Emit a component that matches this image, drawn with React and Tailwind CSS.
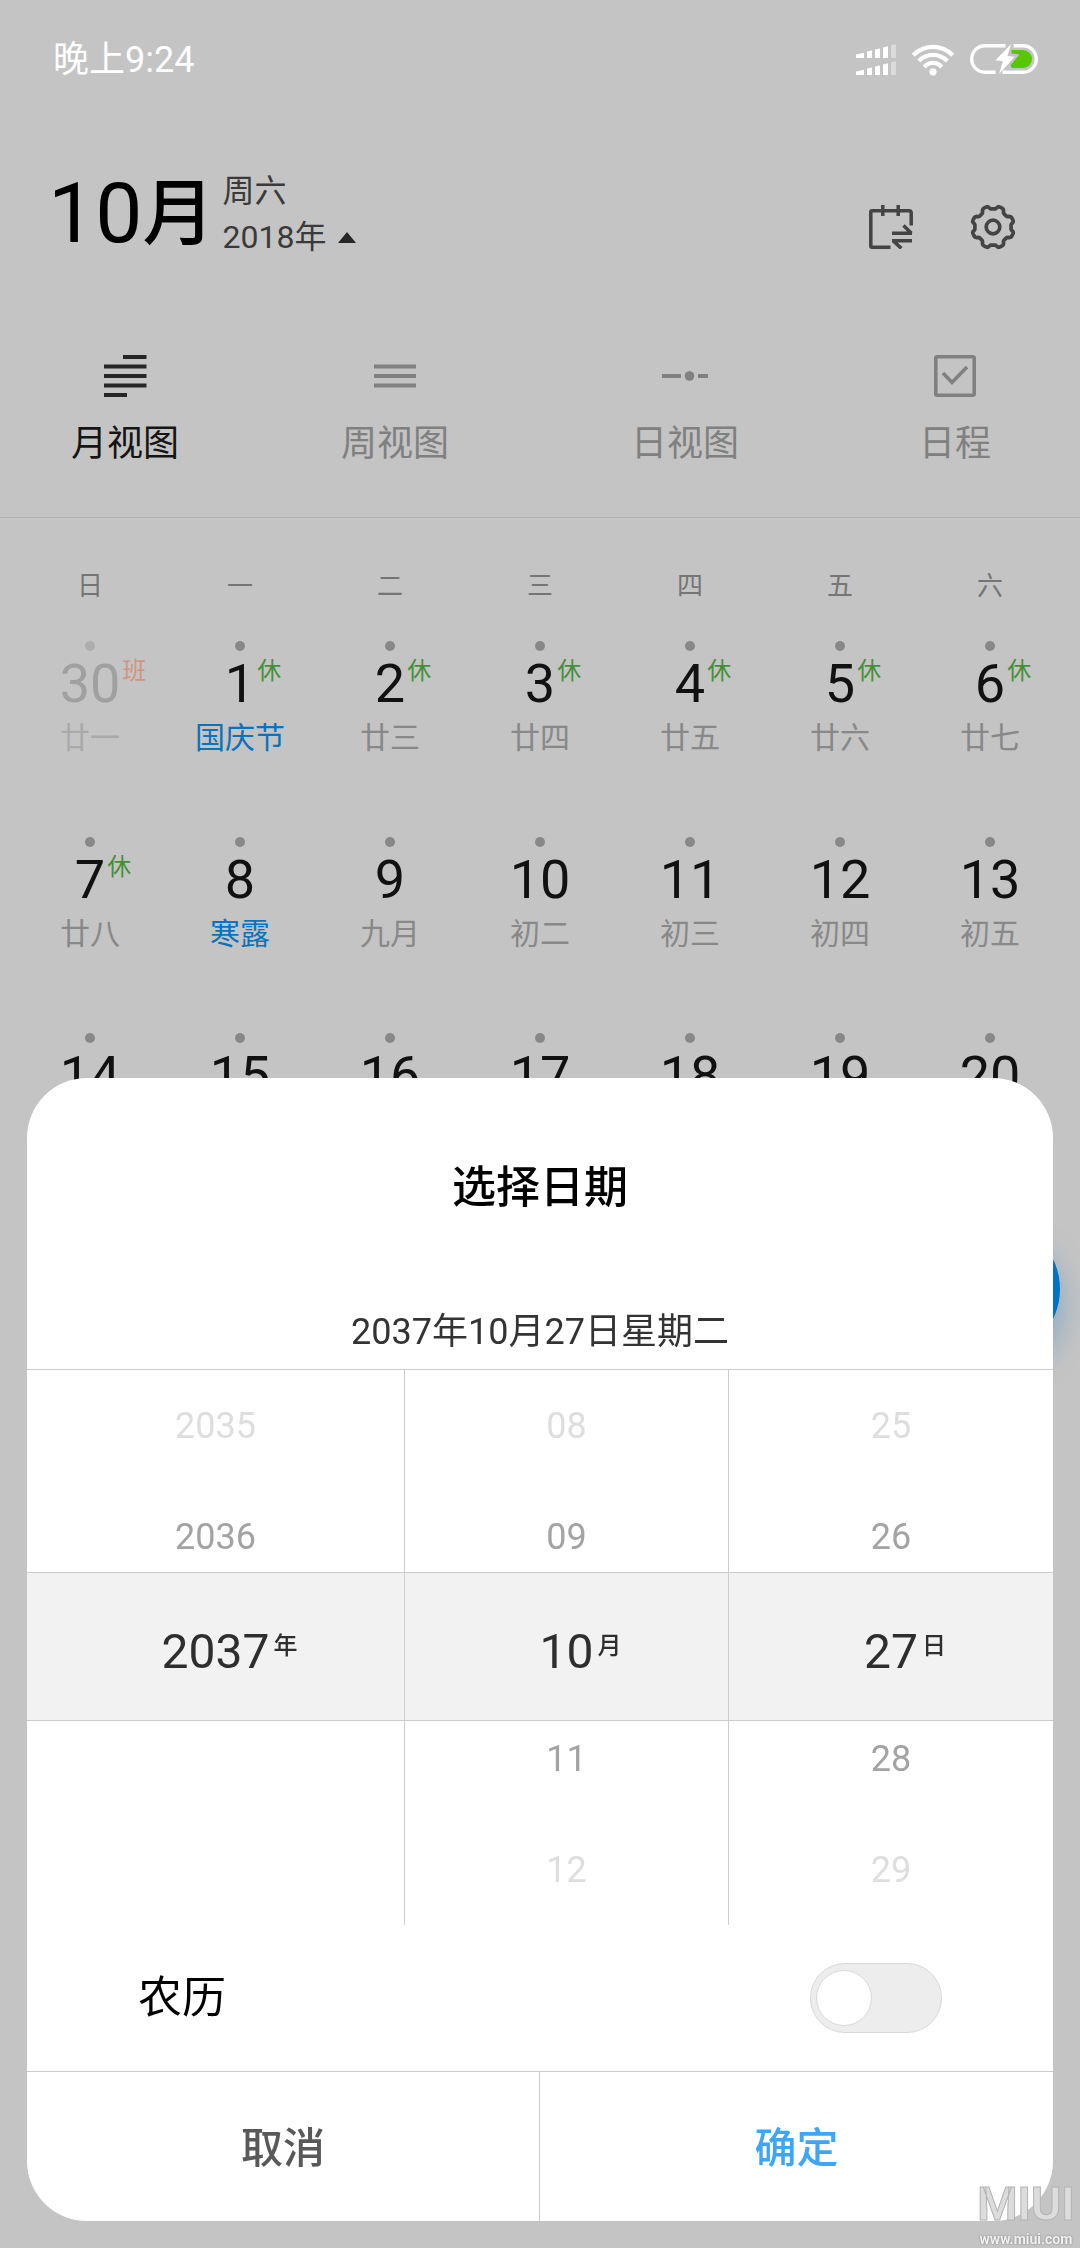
import React, { useState } from 'react';
import clsx from 'clsx';

const weekdays = ['日', '一', '二', '三', '四', '五', '六'];

const weeks = [
    [
        { day: 30, lunar: '廿一', badge: '班', muted: true },
        { day: 1, lunar: '国庆节', badge: '休', festival: true },
        { day: 2, lunar: '廿三', badge: '休' },
        { day: 3, lunar: '廿四', badge: '休' },
        { day: 4, lunar: '廿五', badge: '休' },
        { day: 5, lunar: '廿六', badge: '休' },
        { day: 6, lunar: '廿七', badge: '休' },
    ],
    [
        { day: 7, lunar: '廿八', badge: '休' },
        { day: 8, lunar: '寒露', festival: true },
        { day: 9, lunar: '九月' },
        { day: 10, lunar: '初二' },
        { day: 11, lunar: '初三' },
        { day: 12, lunar: '初四' },
        { day: 13, lunar: '初五' },
    ],
    [
        { day: 14 },
        { day: 15 },
        { day: 16 },
        { day: 17 },
        { day: 18 },
        { day: 19 },
        { day: 20 },
    ],
];

const wheels = [
    { name: '年', values: ['2035', '2036', '2037', '', ''] },
    { name: '月', values: ['08', '09', '10', '11', '12'] },
    { name: '日', values: ['25', '26', '27', '28', '29'] },
];

// Outside rows fade away from the selected one
const wheelColors = ['text-[#dedede]', 'text-[#a3a3a3]', 'text-[#2e2e2e]', 'text-[#a3a3a3]', 'text-[#dedede]'];

const SignalIcon = () => (
    <svg className="w-10 h-8" viewBox="0 0 40 32" fill="#fff">
        <path d="M0 10.5 8 8.7V14H0zM11 7.4 16 6.4V14H11zM19 5.6 24 4.6V14H19zM27 3.4 32 2.2V14H27z" />
        <path d="M35 1.2 40 .2V14H35zM35 18.2 40 17.2V31H35z" opacity=".4" />
        <path d="M0 27.5 8 25.7V31H0zM11 24.4 16 23.4V31H11zM19 22.6 24 21.6V31H19zM27 20.4 32 19.2V31H27z" />
    </svg>
);

const WifiIcon = () => (
    <svg className="w-[42px] h-8" viewBox="0 0 42 32" fill="none" stroke="#fff" strokeWidth="4.2">
        <path d="M1.3 11.2C12.5.2 29.5.2 40.7 11.2" />
        <path d="M6.7 17C15 8.8 27 8.8 35.3 17" />
        <path d="M12.2 23C17 17.6 25 17.6 29.8 23" />
        <circle cx="21" cy="27.8" r="3.6" fill="#fff" stroke="none" />
    </svg>
);

const BatteryIcon = () => (
    <svg className="w-[68px] h-8" viewBox="0 0 68 32">
        <path d="M35.5 1.7H15A13.3 13.3 0 0 0 15 28.3H25.5M43.5 1.7H53A13.3 13.3 0 0 1 53 28.3H32.5" fill="none" stroke="#fff" strokeWidth="3.4" />
        <path d="M41 .2 25.5 16.2 33 17.2 29 30 44.8 12.8 37.4 12z" fill="#fff" />
        <path d="M41.5 6H53A9 9 0 0 1 53 24H43Q41 24 40.6 21L49.5 10.4 41.4 9.6z" fill="#57c800" />
    </svg>
);

const SyncCalendarIcon = () => (
    <svg className="w-[44px] h-[44px]" viewBox="0 0 44 44" fill="none" stroke="#444" strokeWidth="3.5">
        <path d="M21.5 42.2H3Q1.8 42.2 1.8 41V7Q1.8 5.8 3 5.8H40Q42.2 5.8 42.2 8V20.5" />
        <path d="M13.8 0V11M29.2 0V11M23 28.3H43M34.5 20.6 42.4 28.3M23 35.8H43M24 35.8 32.4 43.4" />
    </svg>
);

// Eight teeth, with the notches on the diagonals cut a little deeper
const gearPath = Array.from({ length: 144 }, (_, i) => {
    const angle = (i / 144) * Math.PI * 2;
    const radius = 19.3 - 1.7 * Math.tanh(2.5 * Math.cos(8 * angle)) + 0.5 * Math.cos(4 * angle);
    const x = 23 + radius * Math.sin(angle);
    const y = 23 - radius * Math.cos(angle);
    return `${i ? 'L' : 'M'}${x.toFixed(2)} ${y.toFixed(2)}`;
}).join('') + 'Z';

const GearIcon = () => (
    <svg className="w-[46px] h-[46px]" viewBox="0 0 46 46" fill="none" stroke="#444" strokeWidth="3.7" strokeLinejoin="round">
        <path d={gearPath} />
        <circle cx="23" cy="23" r="6.8" />
    </svg>
);

const MonthIcon = () => (
    <svg className="w-12 h-12" viewBox="0 0 48 48" stroke="#262626" strokeWidth="4">
        <path d="M22 5H45.5M3 14.5H45.5M3 24H45.5M3 33.5H45.5M3 43H26" />
    </svg>
);

const WeekIcon = () => (
    <svg className="w-12 h-12" viewBox="0 0 48 48" stroke="currentColor" strokeWidth="4">
        <path d="M3 14.5H45M3 24H45M3 33.5H45" />
    </svg>
);

const DayIcon = () => (
    <svg className="w-12 h-12" viewBox="0 0 48 48" stroke="currentColor" strokeWidth="4">
        <path d="M1 24H20M37 24H47" />
        <circle cx="28.5" cy="24" r="4.8" fill="currentColor" stroke="none" />
    </svg>
);

const AgendaIcon = () => (
    <svg className="w-12 h-12" viewBox="0 0 48 48" fill="none" stroke="currentColor" strokeWidth="3.6">
        <rect x="4.8" y="4.8" width="38.4" height="38.4" rx="1.5" />
        <path d="M12 21 21 30.5 36 15" />
    </svg>
);

const tabs = [
    { label: '月视图', Icon: MonthIcon },
    { label: '周视图', Icon: WeekIcon },
    { label: '日视图', Icon: DayIcon },
    { label: '日程', Icon: AgendaIcon },
];

const DayCell = ({ day, lunar, badge, festival, muted }) => (
    <td className="h-[196px] p-0 align-top">
        <div className="flex flex-col items-center">
            <span className={clsx('size-[10px] rounded-full', muted ? 'bg-[#adadad]' : 'bg-[#888]')} />
            <span className={clsx('relative mt-[6px] text-[54px] leading-[54px]', muted ? 'text-[#a0a0a0]' : 'text-[#111]')}>
                {day}
                {badge && (
                    <span className={clsx('absolute left-full top-0 ml-[2px] text-2xl leading-[28px]', muted ? 'text-[#d09482]' : 'text-[#449038]')}>
                        {badge}
                    </span>
                )}
            </span>
            <span
                className={clsx(
                    'mt-2 text-[30px] leading-[38px]',
                    festival ? 'text-[#0a73bd]' : muted ? 'text-[#aaa]' : 'text-[#888]'
                )}
            >
                {lunar}
            </span>
        </div>
    </td>
);

const Wheel = ({ name, values }) => (
    <ul aria-label={name}>
        {values.map((value, i) => (
            <li key={i} className={clsx('h-[111px] flex items-center justify-center', wheelColors[i], i === 2 && 'pt-2')}>
                {value && (
                    <button type="button" className={clsx('relative', i === 2 ? 'text-[48px] leading-[60px]' : 'text-[36px] leading-[48px]')}>
                        {value}
                        {i === 2 && (
                            <span className="absolute left-full top-2 ml-1 text-2xl leading-[32px] font-medium">{name}</span>
                        )}
                    </button>
                )}
            </li>
        ))}
    </ul>
);

const DatePicker = () => {
    const [lunar, setLunar] = useState(false);

    return (
        <div role="dialog" aria-labelledby="picker-title" className="fixed inset-x-[27px] bottom-[27px] bg-white rounded-[60px] overflow-hidden">
            <h2 id="picker-title" className="pt-20 text-center text-[44px] leading-[60px] font-medium text-black">选择日期</h2>
            <p className="mt-[90px] mb-[13px] text-center text-[36px] leading-[48px] text-[#333]">2037年10月27日星期二</p>

            <div className="relative border-t border-[#ccc]">
                <div className="absolute inset-x-0 top-[202px] h-[149px] bg-[#f2f2f2] border-y border-[#ccc]" />
                <div className="relative grid grid-cols-[7fr_6fr_6fr] divide-x divide-[#ccc]">
                    {wheels.map((wheel) => (
                        <Wheel key={wheel.name} {...wheel} />
                    ))}
                </div>
            </div>

            <label className="h-[146px] px-[111px] flex items-center justify-between text-[44px] leading-[60px] text-black">
                农历
                <input type="checkbox" role="switch" className="sr-only" checked={lunar} onChange={(e) => setLunar(e.target.checked)} />
                <span className={clsx('w-[132px] h-[70px] px-[5px] flex items-center rounded-full border border-[#d8d8d8]', lunar ? 'bg-[#3da6f8] justify-end' : 'bg-[#ededed]')}>
                    <span className="size-[56px] rounded-full bg-white border border-[#d8d8d8]" />
                </span>
            </label>

            <div className="grid grid-cols-2 divide-x divide-[#ccc] border-t border-[#ccc] text-[42px] font-medium">
                <button type="button" className="h-[149px] pt-1 text-[#595959]">取消</button>
                <button type="button" className="h-[149px] pt-1 text-[#3da6f8]">确定</button>
            </div>
        </div>
    );
};

const App = () => {
    return (
        <div className="relative h-screen overflow-hidden bg-[#c4c4c4] font-['Roboto','Noto_Sans_CJK_SC',sans-serif]">
            {/* Status bar */}
            <div className="h-[120px] pl-[53px] pr-[42px] flex items-center justify-between">
                <span className="text-[36px] leading-[48px] text-white">晚上9:24</span>
                <div className="flex items-center gap-4">
                    <SignalIcon />
                    <WifiIcon />
                    <BatteryIcon />
                </div>
            </div>

            {/* Month header */}
            <header className="h-[180px] pt-11 pl-12 pr-16 flex items-start justify-between">
                <div className="flex items-center gap-2">
                    <h1 className="flex items-center leading-[100px] text-black">
                        <span className="text-[84px]">10</span>
                        <span className="text-[72px] font-medium">月</span>
                    </h1>
                    <button type="button" className="text-left text-[32px] leading-[46px] text-[#3a3a3a]">
                        <span className="block">周六</span>
                        <span className="flex items-center gap-3">
                            2018年
                            <svg className="w-[18px] h-[11px]" viewBox="0 0 18 11" fill="#262626">
                                <path d="M9 0 18 11H0z" />
                            </svg>
                        </span>
                    </button>
                </div>
                <div className="pt-10 flex items-center gap-[57px]">
                    <button type="button" aria-label="同步日历"><SyncCalendarIcon /></button>
                    <button type="button" aria-label="设置"><GearIcon /></button>
                </div>
            </header>

            {/* View tabs */}
            <nav className="pt-[52px] pb-[51px] grid grid-cols-[25fr_29fr_29fr_25fr] border-b border-[#b0b0b0]">
                {tabs.map(({ label, Icon }, i) => (
                    <button key={label} type="button" className={clsx('flex flex-col items-center', i === 0 ? 'text-[#151515]' : 'text-[#808080]')}>
                        <Icon />
                        <span className="mt-[22px] text-[36px] leading-[44px]">{label}</span>
                    </button>
                ))}
            </nav>

            {/* Month grid */}
            <div className="px-[15px]">
                <table className="w-full table-fixed border-collapse">
                    <thead>
                        <tr>
                            {weekdays.map((name) => (
                                <th key={name} className="p-0 pt-[50px] pb-[37px] text-[26px] leading-[36px] font-normal text-[#757575]">{name}</th>
                            ))}
                        </tr>
                    </thead>
                    <tbody>
                        {weeks.map((week, i) => (
                            <tr key={i}>
                                {week.map((cell) => (
                                    <DayCell key={cell.day} {...cell} />
                                ))}
                            </tr>
                        ))}
                    </tbody>
                </table>
            </div>

            <button type="button" aria-label="新建日程" className="fixed right-5 bottom-[891px] size-[136px] rounded-full bg-[#0074c3] shadow-[0_16px_32px_rgba(0,116,195,0.35)]" />

            <DatePicker />

            {/* Watermark */}
            <div className="fixed right-1 bottom-px w-[100px] text-center font-bold text-[#dcdcdc]">
                <div className="text-[46px] leading-[54px] [-webkit-text-stroke:1px_#b4b4b4]">MIUI</div>
                <div className="text-[14px] leading-[16px] text-[#f0f0f0] [text-shadow:0_0_2px_#777]">www.miui.com</div>
            </div>
        </div>
    );
};

export default App;
